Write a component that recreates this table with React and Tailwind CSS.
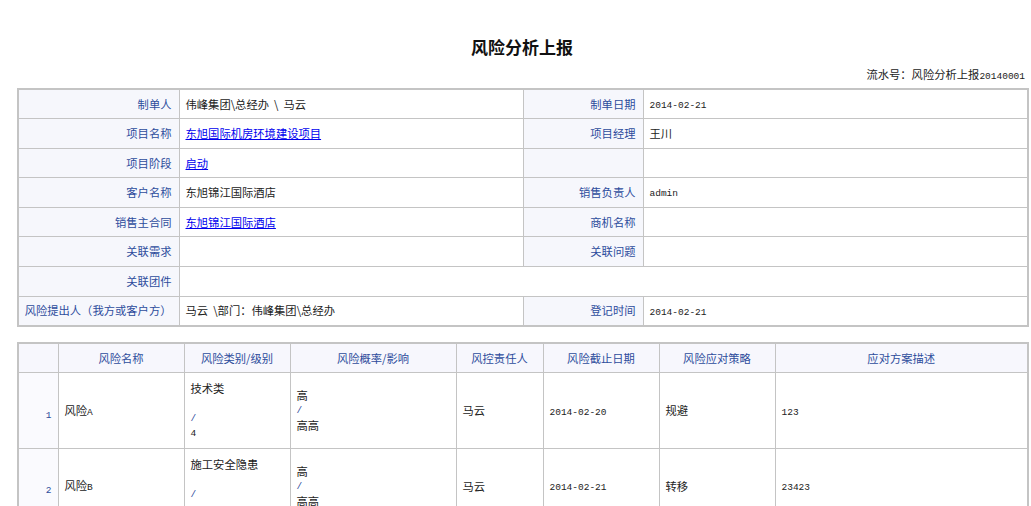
import React from 'react'

const cjk = "font-['Microsoft_YaHei','Noto_Sans_CJK_SC',sans-serif]";
const mono = "font-['Liberation_Mono','Noto_Sans_CJK_SC',monospace]";

const labelCls = 'h-[29.6px] border border-[#c4c4c4] bg-[#f6f7fc] pr-[7px] text-right text-[11.3px] text-[#2d4c9c] whitespace-nowrap';
const valueCls = 'h-[29.6px] border border-[#c4c4c4] bg-white pl-[6px] text-left text-[11.3px] text-[#222]';
const linkCls = 'text-[#0000ee] underline';

function Info() {
    return (
        <table className='w-[1010px] table-fixed border-collapse border-2 border-[#c4c4c4]'>
            <colgroup>
                <col className='w-[161px]' />
                <col className='w-[344px]' />
                <col className='w-[120px]' />
                <col className='w-[385px]' />
            </colgroup>
            <tbody>
                <tr>
                    <td className={labelCls}>制单人</td>
                    <td className={valueCls}>伟峰集团\总经办 &nbsp;\ &nbsp;马云</td>
                    <td className={labelCls}>制单日期</td>
                    <td className={valueCls}><span className={mono + ' text-[9.5px]'}>2014-02-21</span></td>
                </tr>
                <tr>
                    <td className={labelCls}>项目名称</td>
                    <td className={valueCls}><a href='#' className={linkCls}>东旭国际机房环境建设项目</a></td>
                    <td className={labelCls}>项目经理</td>
                    <td className={valueCls}>王川</td>
                </tr>
                <tr>
                    <td className={labelCls}>项目阶段</td>
                    <td className={valueCls}><a href='#' className={linkCls}>启动</a></td>
                    <td className={labelCls}></td>
                    <td className={valueCls}></td>
                </tr>
                <tr>
                    <td className={labelCls}>客户名称</td>
                    <td className={valueCls}>东旭锦江国际酒店</td>
                    <td className={labelCls}>销售负责人</td>
                    <td className={valueCls}><span className={mono + ' text-[9.5px]'}>admin</span></td>
                </tr>
                <tr>
                    <td className={labelCls}>销售主合同</td>
                    <td className={valueCls}><a href='#' className={linkCls}>东旭锦江国际酒店</a></td>
                    <td className={labelCls}>商机名称</td>
                    <td className={valueCls}></td>
                </tr>
                <tr>
                    <td className={labelCls}>关联需求</td>
                    <td className={valueCls}></td>
                    <td className={labelCls}>关联问题</td>
                    <td className={valueCls}></td>
                </tr>
                <tr>
                    <td className={labelCls}>关联团件</td>
                    <td className={valueCls} colSpan={3}></td>
                </tr>
                <tr>
                    <td className={labelCls}>风险提出人（我方或客户方）</td>
                    <td className={valueCls}>马云 &nbsp;\部门：伟峰集团\总经办</td>
                    <td className={labelCls}>登记时间</td>
                    <td className={valueCls}><span className={mono + ' text-[9.5px]'}>2014-02-21</span></td>
                </tr>
            </tbody>
        </table>
    )
}

const risks = [
    { no: 1, name: '风险', tag: 'A', type: '技术类', level: '4', prob: '高', impact: '高高', owner: '马云', date: '2014-02-20', plan: '规避', desc: '123' },
    { no: 2, name: '风险', tag: 'B', type: '施工安全隐患', level: '5', prob: '高', impact: '高高', owner: '马云', date: '2014-02-21', plan: '转移', desc: '23423' },
];

const thCls = 'h-[30px] border border-[#c4c4c4] bg-[#f7f7fd] text-center text-[11.3px] font-normal text-[#2d4c9c]';
const tdCls = 'border border-[#c4c4c4] px-[6px] text-left align-middle text-[11.3px] text-[#222]';

function Risks() {
    return (
        <table className='w-[1010px] table-fixed border-collapse border-2 border-[#c4c4c4]'>
            <colgroup>
                <col className='w-[40px]' />
                <col className='w-[126px]' />
                <col className='w-[106px]' />
                <col className='w-[166px]' />
                <col className='w-[87px]' />
                <col className='w-[116px]' />
                <col className='w-[116px]' />
                <col className='w-[253px]' />
            </colgroup>
            <thead>
                <tr>
                    <th className={thCls}></th>
                    <th className={thCls}>风险名称</th>
                    <th className={thCls}>风险类别/级别</th>
                    <th className={thCls}>风险概率/影响</th>
                    <th className={thCls}>风控责任人</th>
                    <th className={thCls}>风险截止日期</th>
                    <th className={thCls}>风险应对策略</th>
                    <th className={thCls}>应对方案描述</th>
                </tr>
            </thead>
            <tbody>
                {risks.map((r) => (
                    <tr key={r.no} className='h-[76px]'>
                        <td className='border border-[#c4c4c4] bg-[#fafafe] pr-[6px] text-right'>
                            <span className={mono + ' text-[9.5px] text-[#2d4c9c]'}>{r.no}</span>
                        </td>
                        <td className={tdCls}>{r.name}<span className={mono + ' text-[9.5px]'}>{r.tag}</span></td>
                        <td className={tdCls + ' leading-[15px]'}>
                            <div>{r.type}</div>
                            <div className='h-[15px]'></div>
                            <div className={mono + ' text-[9.5px] text-[#2d4c9c]'}>/</div>
                            <div className={mono + ' text-[9.5px]'}>{r.level}</div>
                        </td>
                        <td className={tdCls + ' leading-[15px]'}>
                            <div>{r.prob}</div>
                            <div className={mono + ' text-[9.5px] text-[#2d4c9c]'}>/</div>
                            <div>{r.impact}</div>
                        </td>
                        <td className={tdCls}>{r.owner}</td>
                        <td className={tdCls}><span className={mono + ' text-[9.5px]'}>{r.date}</span></td>
                        <td className={tdCls}>{r.plan}</td>
                        <td className={tdCls}><span className={mono + ' text-[9.5px]'}>{r.desc}</span></td>
                    </tr>
                ))}
            </tbody>
        </table>
    )
}

export default function App() {
    return (
        <div className={'min-h-[506px] w-[1031px] bg-white ' + cjk}>
            <div className='ml-[17px] w-[1010px] pt-[35px]'>
                <h1 className='text-center text-[17px] font-bold leading-[24px] text-[#111]'>风险分析上报</h1>
                <div className='mt-[6px] mb-[2px] pr-[2px] text-right text-[11.3px] leading-[18px] text-[#222]'>
                    流水号：风险分析上报<span className={mono + ' text-[9.5px]'}>20140001</span>
                </div>
                <Info />
                <div className='h-[15px]'></div>
                <Risks />
            </div>
        </div>
    )
}
